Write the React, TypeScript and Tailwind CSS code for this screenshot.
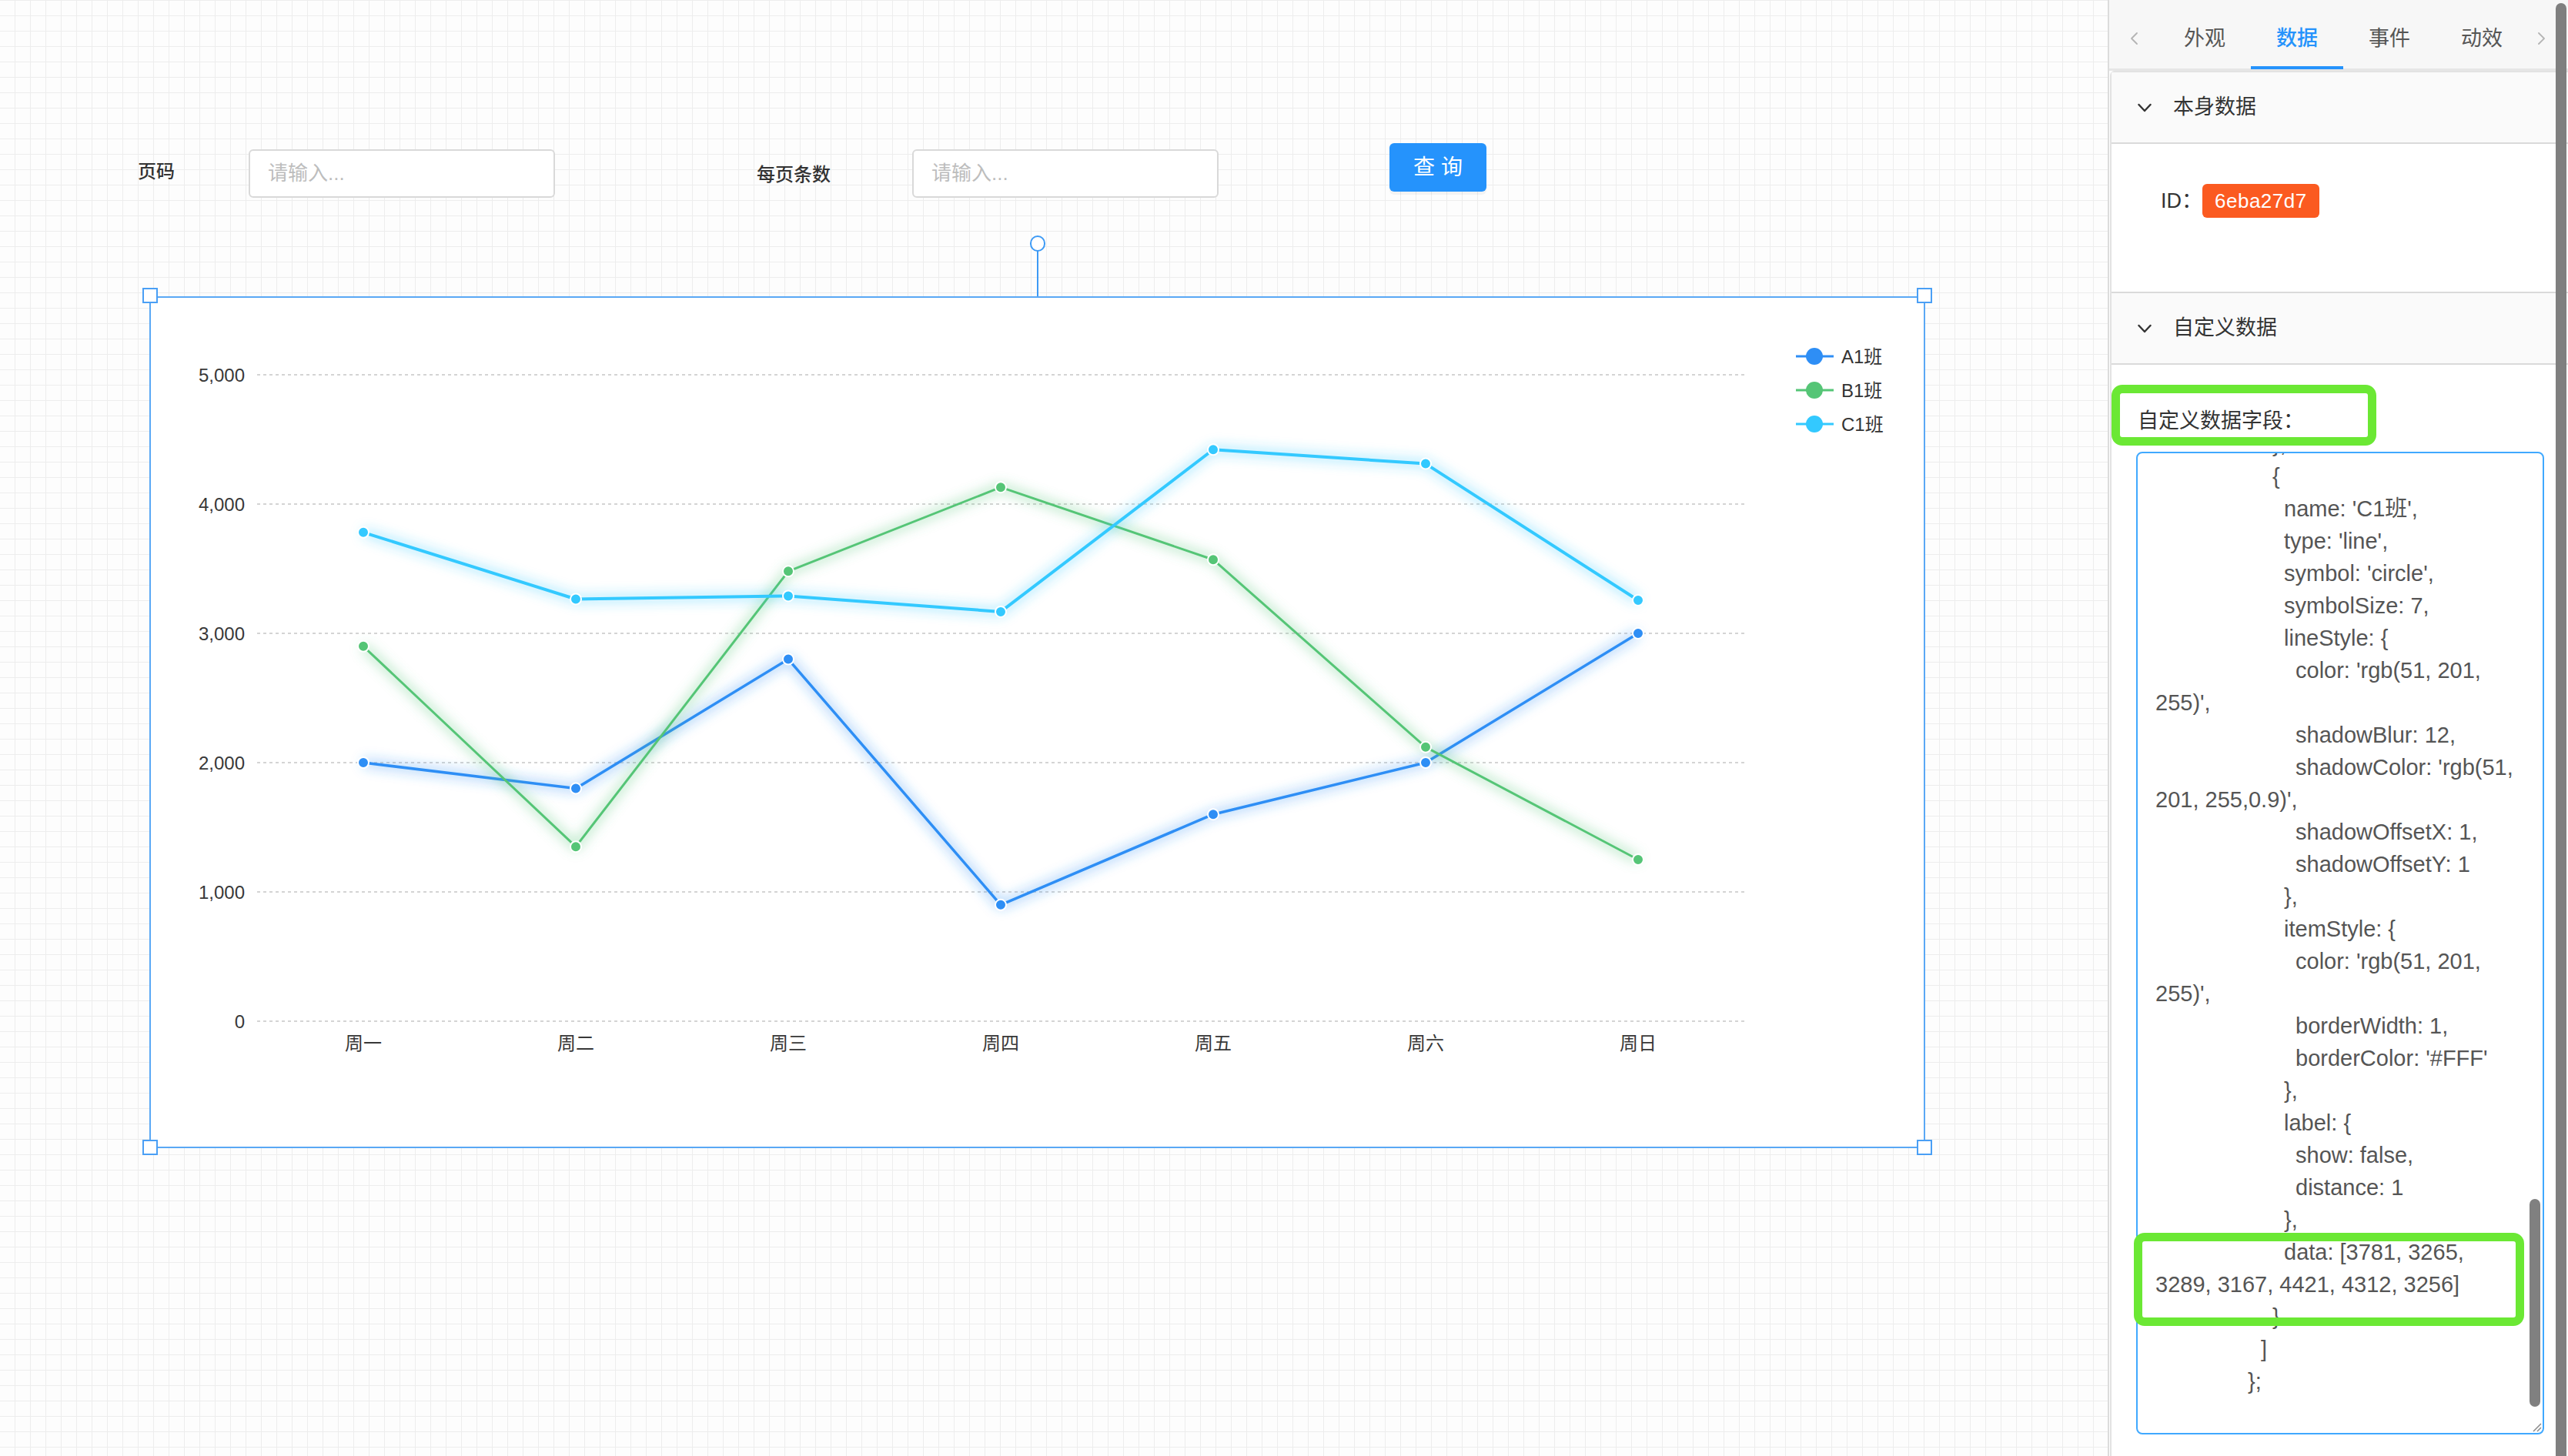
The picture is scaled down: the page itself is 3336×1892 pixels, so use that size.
import React from "react";

const CATS = ["周一", "周二", "周三", "周四", "周五", "周六", "周日"];
const XS = CATS.map((_, i) => 278 + 276 * i);
const yv = (v: number) => 942 - v * 0.168;

const SERIES = [
  { name: "A1班", color: "#2e8ef5", width: 3.5, data: [2000, 1800, 2800, 900, 1600, 2000, 3000] },
  { name: "B1班", color: "#55c576", width: 3, data: [2900, 1350, 3480, 4130, 3570, 2120, 1250] },
  { name: "C1班", color: "#33c9ff", width: 4, data: [3781, 3265, 3289, 3167, 4421, 4312, 3256] },
];

const CODE: [number, string][] = [
  [152, "},"],
  [152, "{"],
  [167, "name: 'C1班',"],
  [167, "type: 'line',"],
  [167, "symbol: 'circle',"],
  [167, "symbolSize: 7,"],
  [167, "lineStyle: {"],
  [182, "color: 'rgb(51, 201,"],
  [0, "255)',"],
  [182, "shadowBlur: 12,"],
  [182, "shadowColor: 'rgb(51,"],
  [0, "201, 255,0.9)',"],
  [182, "shadowOffsetX: 1,"],
  [182, "shadowOffsetY: 1"],
  [167, "},"],
  [167, "itemStyle: {"],
  [182, "color: 'rgb(51, 201,"],
  [0, "255)',"],
  [182, "borderWidth: 1,"],
  [182, "borderColor: '#FFF'"],
  [167, "},"],
  [167, "label: {"],
  [182, "show: false,"],
  [182, "distance: 1"],
  [167, "},"],
  [167, "data: [3781, 3265,"],
  [0, "3289, 3167, 4421, 4312, 3256]"],
  [152, "}"],
  [137, "]"],
  [120, "};"],
];

function Chart() {
  const yTicks = [5000, 4000, 3000, 2000, 1000, 0];
  return (
    <svg width="2307" height="1107" className="absolute left-0 top-0">
      <defs>
        <filter id="glow" filterUnits="userSpaceOnUse" x="0" y="0" width="2307" height="1107">
          <feGaussianBlur stdDeviation="8" />
        </filter>
      </defs>
      {yTicks.map((t) => (
        <g key={t}>
          <line x1="140" x2="2072" y1={yv(t)} y2={yv(t)} stroke="#d4d4d4" strokeWidth="2" strokeDasharray="4 4" />
          <text x="124" y={yv(t)} textAnchor="end" dominantBaseline="central" fontSize="24" fill="#383838">
            {t === 0 ? "0" : t.toLocaleString("en-US")}
          </text>
        </g>
      ))}
      {CATS.map((c, i) => (
        <text key={c} x={XS[i]} y="970" textAnchor="middle" dominantBaseline="central" fontSize="24" fill="#383838">
          {c}
        </text>
      ))}
      {SERIES.map((s) => {
        const pts = s.data.map((v, i) => `${XS[i]},${yv(v)}`).join(" ");
        return (
          <g key={s.name}>
            <polyline points={pts} fill="none" stroke={s.color} strokeWidth="9" strokeOpacity="0.45" filter="url(#glow)" strokeLinejoin="round" />
            <polyline points={pts} fill="none" stroke={s.color} strokeWidth={s.width} strokeLinejoin="round" />
          </g>
        );
      })}
      {SERIES.map((s) => (
        <g key={s.name + "p"}>
          {s.data.map((v, i) => (
            <circle key={i} cx={XS[i]} cy={yv(v)} r="7" fill={s.color} stroke="#ffffff" strokeWidth="2" />
          ))}
        </g>
      ))}
      {SERIES.map((s, i) => {
        const y = 78 + 44 * i;
        return (
          <g key={s.name + "l"}>
            <line x1="2139" x2="2188" y1={y} y2={y} stroke={s.color} strokeWidth="3" />
            <circle cx="2163" cy={y} r="11" fill={s.color} />
            <text x="2198" y={y} dominantBaseline="central" fontSize="24" fill="#333333">
              {s.name}
            </text>
          </g>
        );
      })}
    </svg>
  );
}

function ChevronDown() {
  return (
    <svg width="18" height="12" viewBox="0 0 18 12" className="shrink-0">
      <path d="M1.5 2 L9 10 L16.5 2" fill="none" stroke="#333" strokeWidth="2.4" strokeLinecap="round" strokeLinejoin="round" />
    </svg>
  );
}

function Arrow({ dir }: { dir: "left" | "right" }) {
  return (
    <svg width="12" height="18" viewBox="0 0 12 18">
      <path
        d={dir === "left" ? "M10 2 L3 9 L10 16" : "M2 2 L9 9 L2 16"}
        fill="none"
        stroke="#b4b4b4"
        strokeWidth="1.8"
        strokeLinecap="round"
        strokeLinejoin="round"
      />
    </svg>
  );
}

export default function App() {
  return (
    <div className="w-[3336px] h-[1892px] flex overflow-hidden bg-white font-['Liberation_Sans','Noto_Sans_CJK_SC',sans-serif]">
      {/* Canvas */}
      <div className="relative w-[2738px] h-full shrink-0 bg-[#fdfdfd] bg-[linear-gradient(to_right,#ededed_1px,transparent_1px),linear-gradient(to_bottom,#ededed_1px,transparent_1px)] bg-[size:20px_20px] bg-[position:19px_0px]">
        {/* form components */}
        <div className="absolute left-[179px] top-[206px] leading-[34px] text-[24px] font-medium text-[#333]">页码</div>
        <div className="absolute left-[323px] top-[194px] w-[398px] h-[63px] border-2 border-[#d9d9d9] rounded-[6px] bg-white flex items-center pl-[23px] text-[26px] text-[#bdbdbd]">
          请输入...
        </div>
        <div className="absolute left-[983px] top-[210px] leading-[34px] text-[24px] font-medium text-[#333]">每页条数</div>
        <div className="absolute left-[1185px] top-[194px] w-[398px] h-[63px] border-2 border-[#d9d9d9] rounded-[6px] bg-white flex items-center pl-[23px] text-[26px] text-[#bdbdbd]">
          请输入...
        </div>
        <div className="absolute left-[1805px] top-[186px] w-[126px] h-[63px] bg-[#2593fc] rounded-[6px] text-white text-[28px] flex items-center justify-center shadow-[0_4px_0_rgba(0,0,0,0.04)]">
          查 询
        </div>

        {/* rotate handle */}
        <div className="absolute left-[1347px] top-[325px] w-[2px] h-[60px] bg-[#3d9af5]" />
        <div className="absolute left-[1338px] top-[306px] w-[20px] h-[21px] rounded-full border-2 border-[#3d9af5] bg-white" />

        {/* chart component */}
        <div className="absolute left-[194px] top-[385px] w-[2307px] h-[1107px] bg-white">
          <Chart />
          <div className="absolute inset-0 border-2 border-[#5aa8f5] pointer-events-none" />
          <div className="absolute left-[-9px] top-[-11px] w-[20px] h-[20px] border-2 border-[#4a9ff5] bg-white" />
          <div className="absolute right-[-9px] top-[-11px] w-[20px] h-[20px] border-2 border-[#4a9ff5] bg-white" />
          <div className="absolute left-[-9px] bottom-[-9px] w-[20px] h-[20px] border-2 border-[#4a9ff5] bg-white" />
          <div className="absolute right-[-9px] bottom-[-9px] w-[20px] h-[20px] border-2 border-[#4a9ff5] bg-white" />
        </div>
      </div>

      {/* Right panel */}
      <div className="relative w-[598px] h-full shrink-0 border-l-2 border-[#dcdcdc] bg-white flex flex-col">
        {/* tabs */}
        <div className="h-[92px] shrink-0 bg-[#f7f7f7] border-b-[3px] border-[#e6e6e6] flex items-stretch">
          <div className="w-[64px] flex items-center justify-center pt-[11px]">
            <Arrow dir="left" />
          </div>
          {["外观", "数据", "事件", "动效"].map((t) => {
            const active = t === "数据";
            return (
              <div key={t} className="relative w-[120px] flex items-center justify-center pt-[11px]">
                <span className={active ? "text-[27px] text-[#2593fc] font-medium" : "text-[27px] text-[#555555]"}>{t}</span>
                {active && <div className="absolute left-0 right-0 bottom-[-1px] h-[4px] bg-[#2593fc]" />}
              </div>
            );
          })}
          <div className="w-[36px] flex items-center justify-center pt-[11px]">
            <Arrow dir="right" />
          </div>
        </div>

        {/* collapse */}
        <div className="flex-1 ml-[1px] border-l-2 border-t-2 border-[#e2e2e2] rounded-tl-[6px] flex flex-col">
          <div className="h-[93px] shrink-0 bg-[#fafafa] border-b-2 border-[#dadada] flex items-center pl-[34px] gap-[28px]">
            <ChevronDown />
            <span className="text-[27px] text-[#333]">本身数据</span>
          </div>
          <div className="h-[194px] shrink-0 border-b-2 border-[#dadada] pt-[52px] pl-[64px]">
            <div className="flex items-center h-[44px]">
              <span className="text-[27px] text-[#333]">ID：</span>
              <span className="h-[44px] px-[16px] rounded-[6px] bg-[#fb5a20] text-white text-[26px] tracking-[0.5px] flex items-center">
                6eba27d7
              </span>
            </div>
          </div>
          <div className="h-[93px] shrink-0 bg-[#fafafa] border-b-2 border-[#dadada] flex items-center pl-[34px] gap-[28px]">
            <ChevronDown />
            <span className="text-[27px] text-[#333]">自定义数据</span>
          </div>
          <div className="flex-1 pl-[32px] pt-[53px]">
            <div className="ml-[2px] h-[40px] leading-[40px] text-[27px] text-[#333]">自定义数据字段：</div>
            <div className="relative mt-[20px] w-[530px] h-[1277px] border-2 border-[#40a9ff] rounded-[8px] bg-white overflow-hidden">
              <div className="mt-[-33px] pl-[23px] text-[29px] text-[#555555]">
                {CODE.map(([ind, txt], i) => (
                  <div key={i} className="h-[42px] leading-[42px] whitespace-pre" style={{ paddingLeft: ind }}>
                    {txt}
                  </div>
                ))}
              </div>
              <div className="absolute right-[3px] top-[969px] w-[14px] h-[270px] rounded-full bg-[#808080]" />
              <svg width="16" height="16" viewBox="0 0 16 16" className="absolute right-[1px] bottom-[1px]">
                <path d="M15 5 L5 15 M15 10 L10 15" stroke="#8a8a8a" strokeWidth="1.5" />
              </svg>
            </div>
          </div>
        </div>

        {/* annotation highlights */}
        <div className="absolute left-[3px] top-[500px] w-[344px] h-[79px] border-[11px] border-[#6be834] rounded-[14px] pointer-events-none" />
        <div className="absolute left-[32px] top-[1602px] w-[507px] h-[121px] border-[11px] border-[#6be834] rounded-[14px] pointer-events-none" />

        {/* panel scrollbar */}
        <div className="absolute right-[2px] top-[4px] bottom-0 w-[14px] rounded-t-full bg-[#7f7f7f]" />
      </div>
    </div>
  );
}
